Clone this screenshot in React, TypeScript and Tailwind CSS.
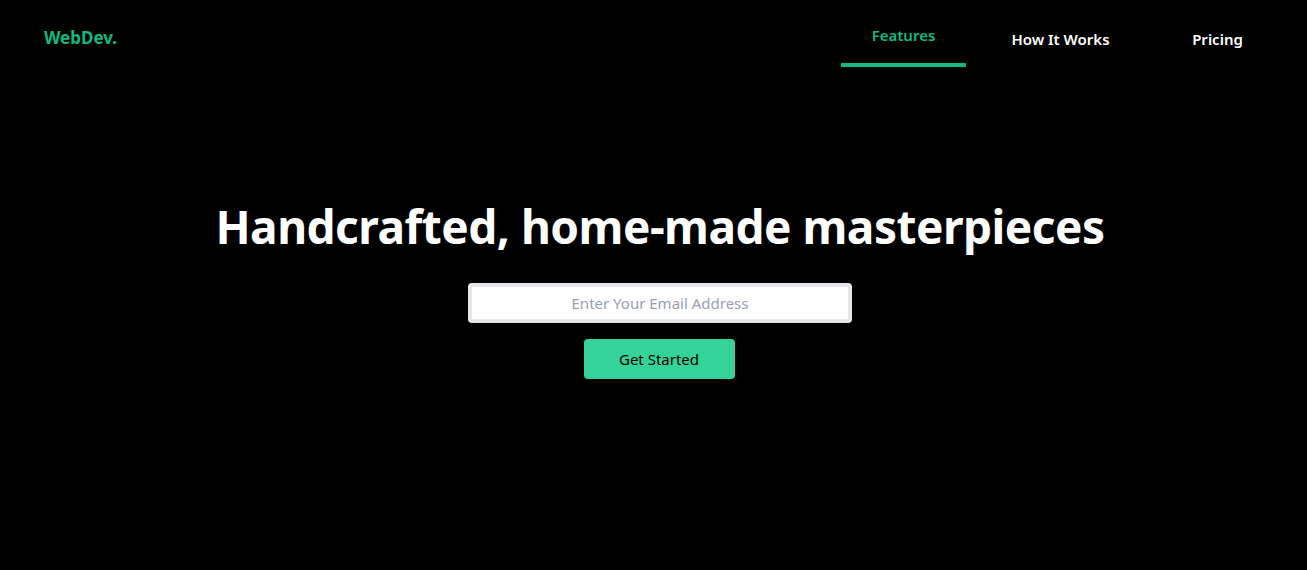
import React from 'react';

const font = { fontFamily: '"Noto Sans", "Open Sans", sans-serif' };

export default function App() {
  return (
    <div className="min-h-[570px] w-full bg-black" style={font}>
      {/* Header */}
      <header className="flex items-start justify-between pl-[44px] pr-[27px]">
        <div className="pt-[26px] text-[17px] font-bold leading-[24px] text-[#10b981]">WebDev.</div>
        <nav className="flex gap-8">
          <a className="w-[125px] h-[67px] pt-[23px] text-center text-[15px] font-semibold leading-[24px] text-[#10b981] border-b-4 border-[#10b981]">
            Features
          </a>
          <a className="w-[125px] pt-[27px] text-center text-[15px] font-semibold leading-[24px] text-white">
            How It Works
          </a>
          <a className="w-[125px] pt-[27px] text-center text-[15px] font-semibold leading-[24px] text-white">
            Pricing
          </a>
        </nav>
      </header>

      {/* Hero */}
      <main className="flex flex-col items-center pl-[13px]">
        <h1 className="mt-[135px] text-[46px] font-bold leading-[48px] text-white tracking-[-0.5px]">
          Handcrafted, home-made masterpieces
        </h1>
        <input
          type="email"
          placeholder="Enter Your Email Address"
          className="mt-[33px] h-[40px] w-96 rounded-sm border-4 border-gray-200 bg-white text-center text-[15px] text-black placeholder:text-gray-400 outline-none"
        />
        <button className="mt-4 mr-[2px] h-[40px] w-[151px] rounded-sm bg-[#34d399] text-[15px] text-black">
          Get Started
        </button>
      </main>
    </div>
  );
}
